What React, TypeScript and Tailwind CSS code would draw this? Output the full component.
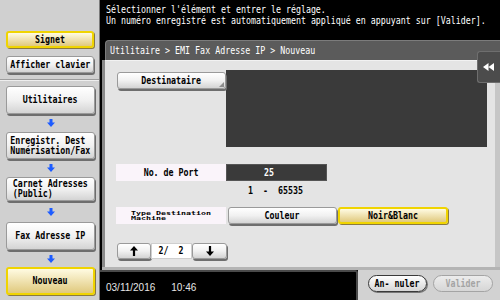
import React from "react";

const MONO = "font-['DejaVu_Sans_Mono',monospace]";

function S10({ children, cls = "origin-center" }: { children: React.ReactNode; cls?: string }) {
  return (
    <span className={`inline-block whitespace-pre text-[10px] leading-[10px] scale-x-[0.83] ${cls}`}>
      {children}
    </span>
  );
}

function S11({ children, cls = "origin-center" }: { children: React.ReactNode; cls?: string }) {
  return (
    <span className={`inline-block whitespace-pre text-[11px] leading-[11px] scale-x-[0.756] ${cls}`}>
      {children}
    </span>
  );
}

const grayBtn =
  "flex items-center justify-center rounded-[3px] border border-[#9a9a9a] bg-gradient-to-b from-[#ffffff] via-[#f1f1f1] to-[#d4d4d4] shadow-[1px_2px_0_#6e6e6e] text-black";
const yellowBtn =
  "flex items-center justify-center rounded-[3px] border-2 border-[#f0d400] bg-gradient-to-b from-[#fffbe2] to-[#e0c97c] shadow-[1px_1px_0_#8a7a40] text-black";

function BlueArrow() {
  return (
    <svg width="8" height="8" viewBox="0 0 8 8">
      <path d="M2.5 0h3v3.6H8L4 8 0 3.6h2.5z" fill="#1d5cff" />
    </svg>
  );
}

function ArrowBox({ h }: { h: string }) {
  return <div className={`${h} flex items-center justify-center`}><BlueArrow /></div>;
}

export default function App() {
  return (
    <div className={`w-[500px] h-[300px] flex overflow-hidden bg-black ${MONO}`}>
      {/* Sidebar */}
      <div className="w-[100px] h-full shrink-0 bg-[#d0d0d0] border-r border-[#7a7a7a] flex flex-col">
        <div className="h-[80px] flex flex-col pl-[6px] pr-[5px] pt-[31px] gap-[8px] border-b border-[#9c9c9c]">
          <div className={`${yellowBtn} h-[17px]`}><S10 cls="origin-center font-bold">Signet</S10></div>
          <div className={`${grayBtn} h-[17px]`}><S10 cls="origin-center font-bold">Afficher clavier</S10></div>
        </div>
        <div className="border-t border-[#eeeeee] flex flex-col pl-[6px] pr-[4px] pt-[5px]">
          <div className={`${grayBtn} h-[28px]`}><S10 cls="origin-center font-bold">Utilitaires</S10></div>
          <ArrowBox h="h-[18px]" />
          <div className={`${grayBtn} h-[27px]`}>
            <S10 cls="origin-center font-bold text-left">{"Enregistr. Dest\nNumérisation/Fax"}</S10>
          </div>
          <ArrowBox h="h-[18px]" />
          <div className={`${grayBtn} h-[24px]`}>
            <S10 cls="origin-center font-bold text-left">{"Carnet Adresses\n(Public)       "}</S10>
          </div>
          <ArrowBox h="h-[21px]" />
          <div className={`${grayBtn} h-[28px]`}><S10 cls="origin-center font-bold">Fax Adresse IP</S10></div>
          <ArrowBox h="h-[17px]" />
          <div className={`${yellowBtn} h-[28px]`}><S10 cls="origin-center font-bold">Nouveau</S10></div>
        </div>
      </div>

      {/* Main */}
      <div className="flex-1 flex flex-col min-w-0">
        <div className="h-[37px] pl-[6px] pt-[4px] text-white flex items-start">
          <S10 cls="origin-left leading-[11px]">
            {"Sélectionner l'élément et entrer le réglage.\nUn numéro enregistré est automatiquement appliqué en appuyant sur [Valider]."}
          </S10>
        </div>

        <div className="mt-[3px] ml-[2px] flex flex-col relative">
          <div className="h-[20px] ml-[3px] bg-[#5b5b5b] rounded-tl-[4px] border-t border-l border-[#7c7c7c] flex items-center pl-[4px] text-white">
            <S11 cls="origin-left">Utilitaire &gt; EMI Fax Adresse IP &gt; Nouveau</S11>
          </div>
          <div className="h-[207px] flex">
            <div className="w-[3px] bg-[#8a8a8a]" />
            <div className="flex-1 bg-[#e4e4e4] border-t border-[#f2f2f2] pl-[11px] pt-[9px] flex flex-col">
              {/* Row 1 */}
              <div className="flex h-[77px]">
                <div className={`${grayBtn} relative ml-[1px] mt-[2px] w-[109px] h-[17px] shadow-[1px_1px_0_#7a7a7a]`}>
                  <S10 cls="origin-center font-bold">Destinataire</S10>
                  <svg className="absolute right-[1px] bottom-[1px]" width="5" height="5" viewBox="0 0 5 5">
                    <path d="M5 0V5H0z" fill="#8c8c8c" />
                  </svg>
                </div>
                <div className="w-[261px] h-[77px] bg-[#3a3a3a]" />
              </div>
              {/* Port */}
              <div className="flex mt-[17px] h-[17px]">
                <div className="w-[110px] h-[17px] bg-[#faf4fa] flex items-center justify-center text-black">
                  <S10 cls="origin-center font-bold">No. de Port</S10>
                </div>
                <div className="w-[101px] h-[17px] bg-[#3a3a3a] border border-[#555555] flex items-center pl-[37px] text-white">
                  <S10 cls="origin-left font-bold">25</S10>
                </div>
              </div>
              <div className="mt-[5px] h-[10px] pl-[132px] text-black flex items-center">
                <S10 cls="origin-left font-bold">{"1  -  65535"}</S10>
              </div>
              {/* Type */}
              <div className="flex mt-[11px] h-[17px]">
                <div className="w-[110px] h-[17px] bg-[#faf4fa] flex items-center pl-[15px] text-black">
                  <div className="scale-y-[0.55] origin-center flex">
                    <S10 cls="origin-left font-bold leading-[9px]">{"Type Destination\nMachine"}</S10>
                  </div>
                </div>
                <div className={`${grayBtn} ml-[2px] w-[109px] h-[17px] shadow-[1px_1px_0_#7a7a7a]`}>
                  <S10 cls="origin-center font-bold">Couleur</S10>
                </div>
                <div className={`${yellowBtn} ml-[1px] w-[110px] h-[17px]`}>
                  <S10 cls="origin-center font-bold">Noir&amp;Blanc</S10>
                </div>
              </div>
              {/* Pager */}
              <div className="flex mt-[19px] ml-[1px] h-[16px]">
                <div className={`${grayBtn} w-[34px] h-[16px] shadow-[1px_1px_0_#6e6e6e]`}>
                  <svg width="8" height="10" viewBox="0 0 8 10">
                    <path d="M4 0L8 4.6H5.1V10H2.9V4.6H0z" fill="#000" />
                  </svg>
                </div>
                <div className="w-[41px] h-[16px] bg-white border border-[#cfcfcf] flex items-center justify-center text-black">
                  <S10 cls="origin-center font-bold">{"2/  2"}</S10>
                </div>
                <div className={`${grayBtn} w-[35px] h-[16px] shadow-[1px_1px_0_#6e6e6e]`}>
                  <svg width="8" height="10" viewBox="0 0 8 10">
                    <path d="M4 10L8 5.4H5.1V0H2.9V5.4H0z" fill="#000" />
                  </svg>
                </div>
              </div>
            </div>
            <div className="w-[5px] bg-[#c6c6c6]" />
          </div>
          <div className="h-[3px] bg-[#b4b4b4]" />

          {/* Side tab */}
          <div className="absolute right-0 top-[11px] w-[23px] h-[32px] bg-[#4c4c4c] border border-r-0 border-[#6e6e6e] rounded-l-[3px] flex items-center justify-center pr-[2px]">
            <svg width="11" height="8" viewBox="0 0 11 8">
              <path d="M0 4L5.5 0V8z M5.5 4L11 0V8z" fill="#ffffff" />
            </svg>
          </div>
        </div>

        {/* Footer */}
        <div className="h-[30px] flex">
          <div className="w-[258px] bg-black border-t-2 border-r-2 border-[#4a4a4a] rounded-tr-[3px] flex items-center pl-[6px] pt-[2px] text-[#e6e6e6] font-['Liberation_Sans',sans-serif] text-[10px]">
            <span>03/11/2016</span>
            <span className="ml-[16px]">10:46</span>
          </div>
          <div className="flex-1 bg-[#d2d2d2] flex items-center gap-[6px] pl-[10px] pb-[3px]">
            <div className="w-[59px] h-[17px] rounded-full border-[1.5px] border-[#3a3a3a] bg-gradient-to-b from-[#ffffff] to-[#d6d6d6] shadow-[1px_1px_0_#777777] flex items-center justify-center text-black">
              <S10 cls="origin-center font-bold">An- nuler</S10>
            </div>
            <div className="w-[60px] h-[17px] rounded-full border-[1.5px] border-[#a4a4a4] bg-gradient-to-b from-[#ececec] to-[#d6d6d6] flex items-center justify-center text-[#a4a4a4]">
              <S10 cls="origin-center font-bold">Valider</S10>
            </div>
          </div>
        </div>
      </div>
    </div>
  );
}
